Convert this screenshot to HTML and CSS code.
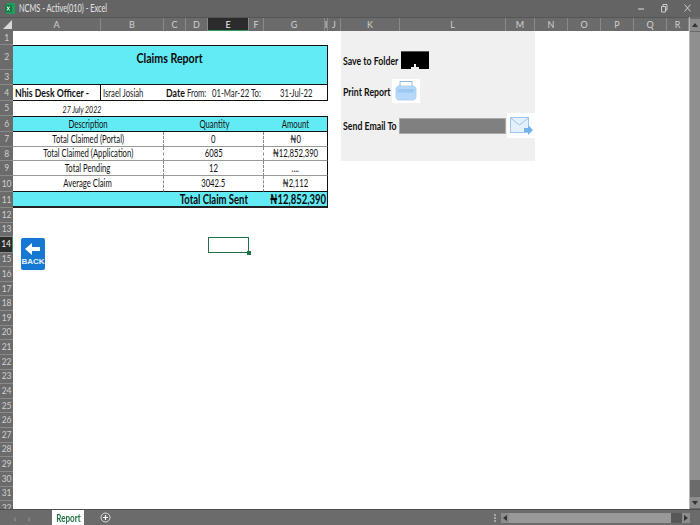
FILE: index.html
```html
<!DOCTYPE html>
<html lang="en">
<head>
<meta charset="utf-8">
<title>NCMS - Active(010) - Excel</title>
<link rel="stylesheet" href="styles.css">
</head>
<body>
<div class="app">
  <header class="titlebar">
    <svg class="xl" width="10" height="11" viewBox="0 0 10 11"><rect x="2" y="0" width="8" height="11" fill="#1e9e5a"/><rect x="0" y="2" width="7" height="7" fill="#107c41"/><path d="M2 3.5l2.6 4M4.6 3.5L2 7.5" stroke="#fff" stroke-width="1"/></svg>
    <span class="title t tl">NCMS - Active(010) - Excel</span>
    <span class="winbtns">
      <svg width="8" height="12" viewBox="0 0 8 12"><path d="M1 7h6" stroke="#ddd" stroke-width="1"/></svg>
      <svg width="8" height="12" viewBox="0 0 8 12"><path d="M1.5 4.5h4v5.5h-4zM3 4.5V2.5h4v5.5H5.5" fill="none" stroke="#ccc" stroke-width="1"/></svg>
      <svg width="9" height="12" viewBox="0 0 9 12"><path d="M1.5 2.5l6 7M7.5 2.5l-6 7" stroke="#ccc" stroke-width="1"/></svg>
    </span>
  </header>

  <div class="workarea">
    <div class="main">
      <div class="colhead">
        <div class="corner"><svg width="9" height="9" viewBox="0 0 9 9"><path d="M9 0v9H0z" fill="#d8d8d8"/></svg></div>
        <div class="cols">
          <span>A</span><span>B</span><span>C</span><span>D</span><span class="on">E</span><span>F</span><span>G</span><span>I</span><span>J</span><span>K</span><span>L</span><span>M</span><span>N</span><span>O</span><span>P</span><span>Q</span><span>R</span>
        </div>
      </div>
      <div class="body">
        <div class="rowhead rows">
          <span>1</span><span>2</span><span>3</span><span>4</span><span>5</span><span>6</span><span>7</span><span>8</span><span>9</span><span>10</span><span>11</span><span>12</span><span>13</span><span class="on">14</span><span>15</span><span>16</span><span>17</span><span>18</span><span>19</span><span>20</span><span>21</span><span>22</span><span>23</span><span>24</span><span>25</span><span>26</span><span>27</span><span>28</span><span>29</span><span>30</span><span>31</span><span>32</span>
        </div>
        <div class="sheet rows">
          <div class="banner"><h1 class="t">Claims Report</h1></div>

          <div class="officer"><b class="t tl">Nhis Desk Officer -</b></div>
          <div class="meta">
            <span class="t tl">Israel Josiah</span>
            <b class="t tl m-date">Date</b>
            <span class="t tl">From:</span>
            <span class="t tl">01-Mar-22</span>
            <span class="t tl">To:</span>
            <span class="t tl">31-Jul-22</span>
          </div>
          <div class="today"><span class="t tr">27 July 2022</span></div>

          <div class="c desc head r6"><span class="t">Description</span></div>
          <div class="c qty head r6"><span class="t">Quantity</span></div>
          <div class="c amt head r6"><span class="t">Amount</span></div>

          <div class="c desc r7"><span class="t">Total Claimed (Portal)</span></div>
          <div class="c qty r7"><span class="t">0</span></div>
          <div class="c amt r7"><span class="t">₦0</span></div>

          <div class="c desc r8"><span class="t">Total Claimed (Application)</span></div>
          <div class="c qty r8"><span class="t">6085</span></div>
          <div class="c amt r8"><span class="t">₦12,852,390</span></div>

          <div class="c desc r9"><span class="t">Total Pending</span></div>
          <div class="c qty r9"><span class="t">12</span></div>
          <div class="c amt r9"><span class="t">....</span></div>

          <div class="c desc r10"><span class="t">Average Claim</span></div>
          <div class="c qty r10"><span class="t">3042.5</span></div>
          <div class="c amt r10"><span class="t">₦2,112</span></div>

          <div class="total">
            <b class="t t-label">Total Claim Sent</b>
            <b class="t tl t-amt">₦12,852,390</b>
          </div>

          <aside class="panel">
            <div class="p-row">
              <div class="p-label"><b class="t tl">Save to Folder</b></div>
              <div class="folder-btn"><svg width="8" height="5" viewBox="0 0 8 5"><path d="M3 0h2v3h3v2H0V3h3z" fill="#eee"/></svg></div>
            </div>
            <div class="p-row p-print">
              <div class="p-label"><b class="t tl">Print Report</b></div>
              <div class="ico-btn">
                <svg width="22" height="24" viewBox="0 0 22 24"><path d="M5 7V2.500h12V7" fill="#fff" stroke="#8db8e4"/><path d="M3 7h16l2 2v10l-2 2H3l-2-2V9z" fill="#b5d8fb" stroke="#a6cdf4" stroke-width=".8"/><rect x="3" y="10" width="16" height="3.500" fill="#9cc9f4"/></svg>
              </div>
            </div>
            <div class="p-row p-mail">
              <div class="p-label"><b class="t tl">Send Email To</b></div>
              <div class="email-field"></div>
              <div class="ico-btn">
                <svg width="24" height="22" viewBox="0 0 24 22"><rect x="1.500" y="2.500" width="18" height="15" fill="#e4f1fd" stroke="#9cc5ee"/><path d="M1.500 3l9 7 9-7" fill="none" stroke="#9cc5ee"/><path d="M15 13h4v-3l5 5-5 5v-3h-4z" fill="#72b2ec"/></svg>
              </div>
            </div>
          </aside>

          <div class="selection"><i></i></div>

          <div class="back">
            <svg width="18" height="14" viewBox="0 0 18 14"><path d="M8 1v4h8v4H8v4L1 7z" fill="#fff"/></svg>
            <span>BACK</span>
          </div>
        </div>
      </div>
    </div>

    <div class="vscroll">
      <div class="sb-btn"><svg width="6" height="4" viewBox="0 0 6 4"><path d="M3 0l3 4H0z" fill="#333"/></svg></div>
      <div class="sb-thumb"></div>
      <div class="sb-btn"><svg width="6" height="4" viewBox="0 0 6 4"><path d="M3 4l3-4H0z" fill="#333"/></svg></div>
    </div>
  </div>

  <footer class="tabbar">
    <span class="nav">‹</span><span class="nav">›</span>
    <div class="tab"><span class="t">Report</span></div>
    <svg class="add" width="11" height="11" viewBox="0 0 11 11"><circle cx="5.500" cy="5.500" r="4.500" fill="none" stroke="#ddd" stroke-width="1"/><path d="M5.500 3v5M3 5.500h5" stroke="#fff" stroke-width="1.200"/></svg>
    <div class="dots"><i></i><i></i><i></i></div>
    <div class="hscroll">
      <div class="hs-btn"><svg width="4" height="6" viewBox="0 0 4 6"><path d="M0 3l4-3v6z" fill="#333"/></svg></div>
      <div class="hs-thumb"></div>
      <div class="hs-btn hs-end"><svg width="4" height="6" viewBox="0 0 4 6"><path d="M4 3L0 0v6z" fill="#333"/></svg></div>
    </div>
  </footer>
</div>
</body>
</html>
```

FILE: styles.css
```css
* { box-sizing: border-box; }
html, body { margin: 0; padding: 0; }
body {
  width: 700px;
  height: 525px;
  overflow: hidden;
  background: #fff;
  font-family: Lato, "Liberation Sans", sans-serif;
  font-size: 11px;
  color: #111;
}
.app { width: 700px; height: 525px; display: flex; flex-direction: column; filter: blur(0.3px); }

/* The capture is squeezed horizontally: text is drawn narrower than its height */
.t { display: inline-block; white-space: nowrap; transform: scaleX(.7); }
b.t, h1.t { transform: scaleX(.76); }
.tl { transform-origin: left center; }
.tr { transform-origin: right center; }

/* title bar */
.titlebar {
  height: 17px;
  flex: none;
  background: #646464;
  display: flex;
  align-items: center;
  padding: 0 8px 1px 5px;
  color: #e4e4e4;
  font-size: 10.500px;
}
.xl { flex: none; }
.title { margin-left: 4px; }
.winbtns { margin-left: auto; display: flex; gap: 15px; align-items: center; }

.workarea { flex: 1; min-height: 0; display: flex; }
.main { width: 689px; flex: none; display: flex; flex-direction: column; }

/* column header */
.colhead { height: 14px; flex: none; display: flex; background: #6b6b6b; border-top: 1px solid #555; }
.corner { width: 13px; flex: none; display: flex; align-items: flex-end; justify-content: flex-end; padding: 0 1px 2px 0; }
.cols {
  flex: 1;
  display: grid;
  grid-template-columns: 88px 63px 22px 22px 41px 15px 61px 3px 13px 59px 106px 29px 33px 33px 33px 33px 22px;
}
.cols span {
  display: flex; align-items: center; justify-content: center;
  color: #d0d0d0; font-size: 9px;
  border-right: 1px solid #8a8a8a;
  overflow: hidden;
}
.cols span.on { background: #2b2b2b; color: #eee; border-bottom: 1px solid #2aa05e; }

.body { flex: 1; min-height: 0; display: flex; overflow: hidden; }
.rows {
  display: grid;
  grid-template-rows: 14px 25px 15px 16px 15px 16px 15px 14px 15px 16px 16px 14.500px 14.500px 15.500px repeat(18, 14.640px);
}
.rowhead { width: 13px; flex: none; background: #6b6b6b; }
.rowhead span {
  display: flex; align-items: center; justify-content: center;
  color: #d0d0d0; font-size: 8.500px;
  letter-spacing: -0.3px;
  border-bottom: 1px solid #8a8a8a;
}
.rowhead span.on { background: #2b2b2b; color: #eee; border-right: 1px solid #2aa05e; }

/* sheet */
.sheet {
  position: relative;
  flex: 1;
  min-width: 0;
  background: #fff;
  grid-template-columns: 88px 63px 22px 22px 41px 15px 61px 3px 13px 59px 106px 29px 33px 33px 33px 33px 22px;
}
.banner {
  grid-column: 1 / span 8;
  grid-row: 2 / span 2;
  background: #63ebf5;
  border: 1.500px solid #111;
  border-left: none;
  text-align: center;
}
.banner h1 { margin: 3px 0 0; font-size: 14px; font-weight: bold; line-height: 18px; color: #0a0a0a; }

.officer {
  grid-column: 1;
  grid-row: 4;
  display: flex; align-items: center;
  padding-left: 2px;
  font-size: 11.500px;
  border-right: 1.500px solid #111;
  border-bottom: 1.500px solid #111;
}
.meta {
  grid-column: 2 / span 7;
  grid-row: 4;
  display: grid;
  grid-template-columns: 63px 21px 25px 39px 29px 1fr;
  align-items: center;
  padding-left: 2px;
  font-size: 11px;
  border-right: 1.500px solid #111;
  border-bottom: 1.500px solid #111;
  color: #222;
}
.m-date { color: #111; font-size: 11.500px; }
.today {
  grid-column: 1;
  grid-row: 5;
  display: flex; align-items: center; justify-content: flex-end;
  font-style: italic;
  font-size: 10px;
}

.c {
  display: flex; align-items: center; justify-content: center;
  font-size: 11px;
  color: #111;
  padding-bottom: 1.500px;
  border-bottom: 1px solid #999;
}
.desc { grid-column: 1 / span 2; border-right: 1px dashed #888; }
.qty { grid-column: 3 / span 4; border-right: 1px dashed #888; }
.amt { grid-column: 7 / span 2; border-right: 1.500px solid #111; }
.r6 { grid-row: 6; }
.r7 { grid-row: 7; }
.r8 { grid-row: 8; }
.r9 { grid-row: 9; }
.r10 { grid-row: 10; border-bottom: 1.500px solid #111; }
.head {
  background: #63ebf5;
  border-top: 1.500px solid #111;
  border-bottom: 1.500px solid #111;
  border-right: none;
}
.head.amt { border-right: 1.500px solid #111; }

.total {
  grid-column: 1 / span 8;
  grid-row: 11;
  background: #63ebf5;
  border-bottom: 2px solid #222;
  border-right: 1.500px solid #111;
  display: grid;
  grid-template-columns: 151px 100px 1fr;
  align-items: center;
  font-size: 12.500px;
  color: #0a0a0a;
}
.t-label { grid-column: 2; justify-self: center; }
.t-amt { grid-column: 3; justify-self: start; margin-left: 6px; }

/* side panel */
.panel {
  grid-column: 10 / span 3;
  grid-row: 1 / span 9;
  height: 130px;
  background: #f0f0f0;
  padding: 20px 0 0 2px;
  display: flex;
  flex-direction: column;
  gap: 10px;
}
.p-row { display: flex; align-items: center; font-size: 11.500px; color: #111; height: 18px; }
.p-label { width: 58px; flex: none; }
.p-print { height: 24px; }
.p-print .p-label { width: 49px; }
.p-mail { height: 25px; }
.p-mail .p-label { width: 56px; }
.folder-btn {
  width: 28px; height: 18px;
  background: #000;
  border-top: 1px solid #555;
  display: flex; align-items: flex-end; justify-content: center;
}
.ico-btn {
  width: 28px; height: 100%;
  background: #fff;
  display: flex; align-items: center; justify-content: center;
}
.email-field { width: 107px; height: 16px; background: #808080; border: 1px solid #aaa; margin-right: 1px; }

/* overlays on the sheet */
.selection {
  position: relative;
  grid-column: 5;
  grid-row: 14;
  border: 1.500px solid #217346;
}
.selection i { position: absolute; right: -3px; bottom: -3px; width: 4px; height: 4px; background: #217346; }
.back {
  position: absolute;
  left: 8px;
  top: 207px;
  width: 24px;
  height: 32px;
  border-radius: 2px;
  background: #1578d2;
  display: flex; flex-direction: column; align-items: center; justify-content: center;
  color: #e8f2fc;
  font: bold 8px "Liberation Sans", sans-serif;
}
.back svg { margin-bottom: 1px; }

/* vertical scrollbar */
.vscroll {
  width: 11px;
  flex: none;
  background: #6b6b6b;
  border-left: 1px solid #b5b5b5;
  display: flex;
  flex-direction: column;
}
.sb-btn { height: 12px; flex: none; background: #8c8c8c; margin-top: 2px; display: flex; align-items: center; justify-content: center; }
.sb-btn:last-child { margin: 0; height: 11px; }
.sb-thumb { height: 448px; flex: none; background: #8f8f8f; margin: 1px 0 17px; }

/* tab bar */
.tabbar {
  height: 16px;
  flex: none;
  background: #6b6b6b;
  display: flex;
  align-items: center;
  border-top: 1px solid #4f4f4f;
}
.nav { width: 14px; text-align: center; color: #a8a8a8; font-size: 10px; line-height: 12px; }
.nav:first-child { margin-left: 8px; }
.tab {
  margin-left: 16px;
  width: 32px;
  height: 15px;
  background: #fff;
  color: #217346;
  font-weight: bold;
  font-size: 11.500px;
  display: flex; align-items: center; justify-content: center;
}
.add { margin-left: 16px; }
.dots { margin-left: auto; margin-right: 5px; display: flex; flex-direction: column; gap: 1px; }
.dots i { display: block; width: 2px; height: 2px; background: #a8a8a8; }
.hscroll { width: 189px; height: 10px; margin-right: 10px; background: #585858; display: flex; }
.hs-btn { width: 8px; flex: none; background: #8c8c8c; display: flex; align-items: center; justify-content: center; }
.hs-thumb { width: 162px; background: #999; }
.hs-end { margin-left: auto; }
```
